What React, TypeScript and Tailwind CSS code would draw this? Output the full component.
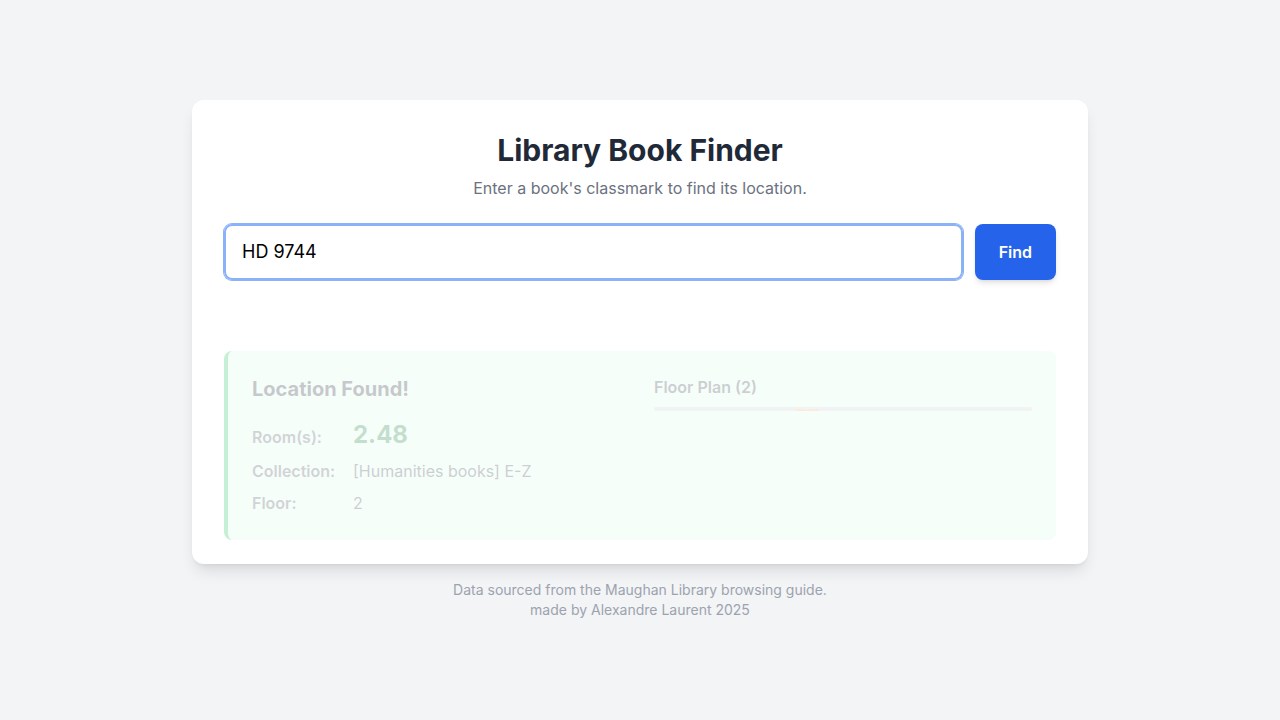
import { useState } from "react";

const details = [
  { label: "Room(s):", value: "2.48", highlight: true },
  { label: "Collection:", value: "[Humanities books] E-Z", highlight: false },
  { label: "Floor:", value: "2", highlight: false },
];

function SearchForm() {
  const [classmark, setClassmark] = useState("HD 9744");
  return (
    <form className="flex gap-3" onSubmit={(e) => e.preventDefault()}>
      <input
        type="text"
        aria-label="Classmark"
        value={classmark}
        onChange={(e) => setClassmark(e.target.value)}
        className="min-w-0 grow rounded-lg border-2 border-[#8bb2f6] px-4 py-3 text-lg text-black ring-1 ring-[#8bb2f6] outline-none"
      />
      <button
        type="submit"
        className="rounded-lg bg-[#2563eb] px-6 py-3 font-semibold text-white shadow-md hover:bg-[#1d4ed8]"
      >
        Find
      </button>
    </form>
  );
}

function FloorPlan() {
  return (
    <div>
      <h3 className="mb-2 font-semibold text-[#374151]">Floor Plan (2)</h3>
      <div className="flex h-1 overflow-hidden rounded-sm bg-[#ccd1d8]">
        <svg viewBox="0 0 378 4" className="h-1 w-full" aria-hidden="true">
          <path d="M142 2h9v1h4v-1h9v2h-22z" fill="#ffad66" />
        </svg>
      </div>
    </div>
  );
}

function Result() {
  return (
    <section className="mt-[71px] grid grid-cols-2 gap-6 rounded-lg border-l-4 border-[#22c55e] bg-[#dafee8] px-6 pt-6 pb-[25px] opacity-25">
      <div>
        <h2 className="mb-4 text-xl font-bold text-[#1f2937]">Location Found!</h2>
        <dl className="grid grid-cols-[85px_1fr] items-baseline gap-x-4 gap-y-2">
          {details.map((d) => (
            <div key={d.label} className="contents">
              <dt className="font-semibold text-[#4b5563]">{d.label}</dt>
              <dd className={d.highlight ? "text-2xl font-bold text-[#15803d]" : "text-[#374151]"}>
                {d.value}
              </dd>
            </div>
          ))}
        </dl>
      </div>
      <FloorPlan />
    </section>
  );
}

export default function App() {
  return (
    <div className="flex min-h-screen flex-col items-center justify-center bg-[#f3f4f6] p-4 font-[Inter,sans-serif]">
      <main className="w-full max-w-4xl rounded-xl bg-white px-8 pt-8 pb-6 shadow-lg">
        <header className="mb-6 text-center">
          <h1 className="text-3xl font-bold text-[#1f2937]">Library Book Finder</h1>
          <p className="mt-2 text-[#6b7280]">Enter a book's classmark to find its location.</p>
        </header>
        <SearchForm />
        <Result />
      </main>
      <footer className="mt-4 text-center text-sm text-[#9ca3af]">
        <p>Data sourced from the Maughan Library browsing guide.</p>
        <p>made by Alexandre Laurent 2025</p>
      </footer>
    </div>
  );
}
